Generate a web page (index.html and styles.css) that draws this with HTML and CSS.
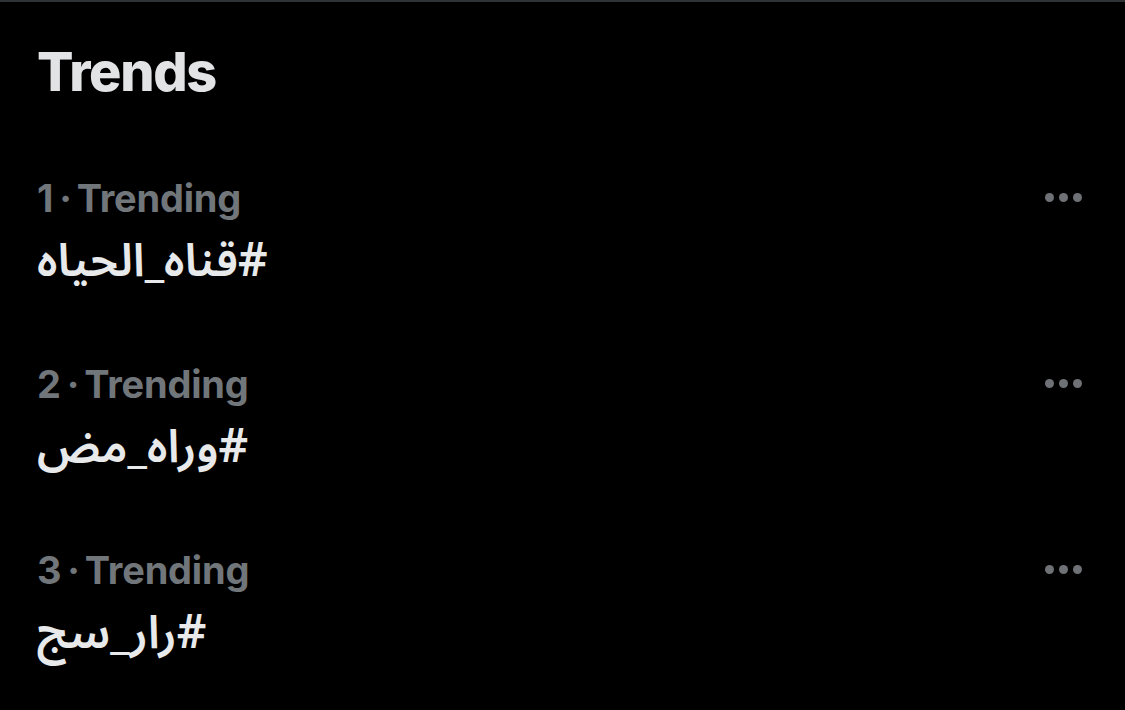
FILE: index.html
```html
<!DOCTYPE html>
<html lang="en">
<head>
<meta charset="utf-8">
<title>Trends</title>
<link rel="stylesheet" href="styles.css">
</head>
<body>
<div class="panel">
  <h2 class="title">Trends</h2>
  <div class="trend">
    <div class="trend-text">
      <div class="meta">1<span class="sep">·</span>Trending</div>
      <div class="tag" dir="rtl">#قناه_الحياه</div>
    </div>
    <div class="more"><span></span><span></span><span></span></div>
  </div>
  <div class="trend">
    <div class="trend-text">
      <div class="meta">2<span class="sep">·</span>Trending</div>
      <div class="tag" dir="rtl">#وراه_مض</div>
    </div>
    <div class="more"><span></span><span></span><span></span></div>
  </div>
  <div class="trend">
    <div class="trend-text">
      <div class="meta">3<span class="sep">·</span>Trending</div>
      <div class="tag" dir="rtl">#رار_سج</div>
    </div>
    <div class="more"><span></span><span></span><span></span></div>
  </div>
</div>
</body>
</html>
```
FILE: styles.css
```css
html, body {
  margin: 0;
  padding: 0;
  background: #000;
}
body {
  width: 1125px;
  height: 710px;
  overflow: hidden;
  font-family: Inter, "DejaVu Sans", sans-serif;
}
.panel {
  border-top: 2px solid #2f3336;
  height: 708px;
  box-sizing: border-box;
  padding: 0 37px;
}
.title {
  margin: 0;
  padding-top: 38px;
  font-size: 54px;
  font-weight: 800;
  line-height: 64px;
  color: #e1e3e4;
  letter-spacing: -1.3px;
}
.trend {
  display: flex;
  justify-content: space-between;
  align-items: flex-start;
  padding-top: 70px;
  height: 116px;
}
.trend-text {
  display: flex;
  flex-direction: column;
}
.meta {
  font-size: 38px;
  font-weight: 700;
  color: #71767b;
  line-height: 48px;
  letter-spacing: -0.2px;
}
.sep {
  margin: 0 5px 0 6px;
}
.tag {
  margin-top: 7px;
  text-align: left;
  font-family: "Noto Sans Arabic", "DejaVu Sans", sans-serif;
  font-size: 46px;
  font-weight: 600;
  color: #e7e9ea;
  line-height: 66px;
  letter-spacing: 0.3px;
}
.more {
  display: flex;
  gap: 5px;
  margin-top: 19px;
  margin-right: 6px;
}
.more span {
  width: 9px;
  height: 9px;
  border-radius: 50%;
  background: #6e7175;
}
```
